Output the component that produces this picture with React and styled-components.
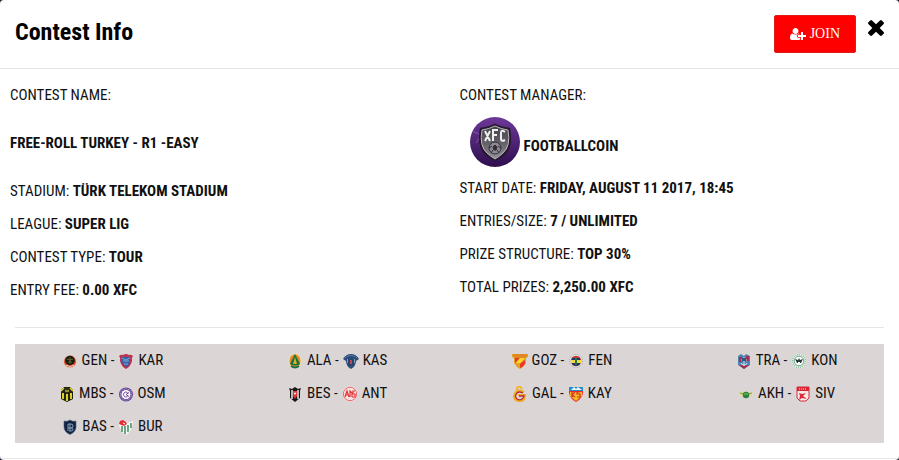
import React from "react";
import styled, { createGlobalStyle } from "styled-components";

const GlobalStyle = createGlobalStyle`
  * { box-sizing: border-box; }
  body {
    margin: 0;
    background: #25232f;
    color: #111;
    font-family: "Roboto Condensed", "Liberation Sans Narrow", Roboto, sans-serif;
    font-size: 15px;
    line-height: 23px;
  }
`;

const Modal = styled.section`
  background: #fff;
  border-radius: 4px;
  overflow: hidden;
`;

const Header = styled.header`
  display: flex;
  align-items: flex-start;
  gap: 12px;
  padding: 15px;
  border-bottom: 1px solid #e5e5e5;
`;

const Title = styled.h1`
  flex: 1;
  margin: 0;
  color: #000;
  font-size: 24px;
  font-weight: 700;
  line-height: 35px;
`;

const JoinButton = styled.button`
  display: flex;
  align-items: center;
  justify-content: center;
  gap: 4px;
  height: 38px;
  padding: 0 15px;
  border: 1px solid #e01b1b;
  border-radius: 2px;
  background: #f00;
  color: #fff;
  font-family: "Liberation Serif", serif;
  font-size: 14px;
  cursor: pointer;

  svg { width: 16px; height: 14px; fill: currentColor; }
`;

const CloseButton = styled.button`
  display: flex;
  padding: 2px 0;
  border: 0;
  background: none;
  color: #000;
  cursor: pointer;

  svg { width: 16px; height: 22px; fill: currentColor; }
`;

const Details = styled.div`
  display: grid;
  grid-template-columns: 1fr 1fr;
  padding: 15px 0 25px;
`;

const Column = styled.div`
  display: flex;
  flex-direction: column;
  gap: 10px;
  padding: 0 10px;
`;

const Field = styled.p`
  margin: 0;
  font-weight: ${(p) => (p.$strong ? 700 : 400)};
  padding: ${(p) => (p.$spaced ? "15px 0" : "0")};

  strong { font-weight: 700; }
`;

const Manager = styled.div`
  display: flex;
  align-items: center;
  gap: 4px;
  padding-left: 10px;
  font-weight: 700;

  svg { width: 50px; height: 50px; }
  span { padding-top: 8px; }
`;

const Fixtures = styled.div`
  margin: 0 15px;
  padding: 16px 0 15px;
  border-top: 1px solid #e5e5e5;
`;

const FixturePanel = styled.div`
  background: #dbd5d5;
`;

const FixtureList = styled.ul`
  display: grid;
  grid-template-columns: repeat(4, 1fr);
  margin: 0 -15px;
  padding: 0;
  list-style: none;
`;

const FixtureRow = styled.li`
  display: flex;
  align-items: center;
  justify-content: center;
  gap: 4px;
  height: 33px;
  white-space: nowrap;

  svg { width: 16px; height: 16px; }
`;

const Footer = styled.footer`
  height: 2px;
  border-top: 1px solid #e5e5e5;
`;

const shield = "M2 2Q5 3 8 1Q11 3 14 2V8Q14 13 8 15.500Q2 13 2 8Z";

const crests = {
  GEN: (
    <>
      <circle cx="8" cy="8.500" r="6.500" fill="#e8b9a0" />
      <circle cx="8" cy="8.500" r="5.800" fill="#d9361f" />
      <circle cx="8" cy="7.500" r="4.700" fill="#171b12" />
      <path d="M5 6l3 1 3-1M8 4v7M6 9h4" stroke="#5d6a2a" fill="none" />
      <path d="M4 12q4 3 8 0" stroke="#f6d8ba" fill="none" />
    </>
  ),
  KAR: (
    <>
      <path d="M1 3Q3 1 5 2Q8 0 11 2Q13 1 15 3Q13 5 14 8Q13 13 8 16Q3 13 2 8Q3 5 1 3Z" fill="#b93450" />
      <path d="M4 4h8v5q-1 3-4 5q-3-2-4-5Z" fill="#315fa9" />
      <path d="M4 5l4 2 4-2M5 8h6M6 11h4" stroke="#89add8" fill="none" />
    </>
  ),
  MBS: (
    <>
      <path d="M2 4L5 1h6l3 3v9l-6 3-6-3Z" fill="#20200d" />
      <path d="M4 7v6M8 8v7M12 7v6" stroke="#eae329" strokeWidth="1.800" />
      <path d="M2 5l3-3M14 5l-3-3M3 9h2M11 9h2" stroke="#ded62a" strokeWidth="1.500" />
      <path d="M6 2h4v4l-2 2-2-2Z" fill="#34320d" />
      <path d="M6 5h4" stroke="#f0ed70" />
    </>
  ),
  OSM: (
    <>
      <circle cx="8" cy="8.500" r="7" fill="#69459a" />
      <circle cx="8" cy="8.500" r="5.600" fill="none" stroke="#c6b5d9" strokeDasharray="1 1" />
      <circle cx="8" cy="8.500" r="4.500" fill="#fff" />
      <path d="M9.500 6.500A2.500 2.500 0 1 0 9.500 10.500M8 8.500l3-2M8 8.500l3 2" stroke="#69459a" fill="none" />
    </>
  ),
  BAS: (
    <>
      <path d={shield} fill="#102344" stroke="#53637b" strokeWidth=".6" />
      <path d="M6 12V5h3q2 0 2 2t-2 2H6m3 0q2 0 2 1.500T9 12H7M8 5v7" fill="none" stroke="#a9bbd0" strokeWidth=".8" />
    </>
  ),
  BUR: (
    <>
      <path d="M1 5L4 2h3l3 2 5-2q0 9-7 14Q2 13 1 5Z" fill="#f5f8f3" />
      <path d="M4 7v6M7 7v8M10 6v7M13 4v5" stroke="#348455" strokeWidth="1.400" />
      <path d="M1 5l1-3 3-1 3 2 1 2-3 2Z" fill="#e52b34" />
      <path d="M5 4l2 1M9 4l2 2" stroke="#fff" />
    </>
  ),
  ALA: (
    <>
      <ellipse cx="8" cy="8" rx="6.500" ry="7.500" fill="#f3e6b4" />
      <ellipse cx="8" cy="8" rx="5.600" ry="6.700" fill="#e48c27" />
      <path d="M8 1L3 11q5 3 10 0Z" fill="#147141" />
      <path d="M8 4l-2 7h4Z" fill="#d6b22d" />
      <path d="M4 13q4 3 8 0" stroke="#187243" strokeWidth="2" fill="none" />
    </>
  ),
  KAS: (
    <>
      <path d="M0 6Q3 1 8 1Q13 1 16 6L13 8q0 5-5 8Q3 13 3 8Z" fill="#294c79" />
      <path d="M2 5q6-5 12 0" stroke="#91a9c6" fill="none" strokeDasharray="1 1" />
      <path d="M4 6h8v3q-1 3-4 5Q5 12 4 9Z" fill="#8fa2b8" />
      <path d="M5 6h6v6l-3 2-3-2Z" fill="#24466e" />
      <path d="M7 7h2v4H7Z" fill="#c94558" />
    </>
  ),
  BES: (
    <>
      <path d="M2 2l3 1 3-2 3 2 3-1-1 3v7l-5 4-5-4V5Z" fill="#171717" />
      <path d="M5 4v9M11 4v9" stroke="#eee" strokeWidth="1.500" />
      <path d="M6 5h4v5l-2 3-2-3Z" fill="#e43235" />
      <circle cx="8" cy="7.500" r="1" fill="#fff" />
    </>
  ),
  ANT: (
    <>
      <circle cx="8" cy="8" r="7.500" fill="#f8e3e2" />
      <circle cx="8" cy="8" r="6.700" fill="none" stroke="#e86868" />
      <path d="M3 11l2-6 2 6M4 9h2M8 11V5l2 2v4M13 5h-2v3h2v3h-3" fill="none" stroke="#df3438" strokeWidth="1.200" />
    </>
  ),
  GOZ: (
    <>
      <path d="M0 1h16v3l-2 1v5q-2 4-6 6-4-2-6-6V5L0 4Z" fill="#e4a126" />
      <path d="M1 2h14M2 4h12" stroke="#e36b22" />
      <path d="M3 5h5L3 10ZM8 11l5-4v4q-2 3-5 4Z" fill="#e7372b" />
      <path d="M8 5h5L8 10H4Z" fill="#ffdc28" />
    </>
  ),
  FEN: (
    <>
      <circle cx="8" cy="8" r="7.500" fill="#e5e3e3" />
      <circle cx="8" cy="8" r="6.700" fill="none" stroke="#879da2" strokeDasharray="1 1" />
      <circle cx="8" cy="8" r="5.300" fill="#cf332b" />
      <path d="M4 5h8v6q-4 4-8 0Z" fill="#1b376c" />
      <path d="M3 7h10v3H3Z" fill="#f0dd39" />
      <path d="M8 5v7" stroke="#287648" strokeWidth="2" />
    </>
  ),
  GAL: (
    <g fill="none">
      <path d="M10 3Q8-1 5 2q-1 3 3 3" stroke="#f3b52b" strokeWidth="2" />
      <path d="M12 6Q7 3 4 6q-4 5 0 8 5 3 8-1l1-4H6" stroke="#f0aa27" strokeWidth="2.200" />
      <path d="M11 7Q7 5 5 7q-3 3 0 6 4 2 6-1l1-2H7" stroke="#b82d35" strokeWidth="1.300" />
    </g>
  ),
  KAY: (
    <>
      <path d="M1 1h14v6q-1 6-7 9-6-3-7-9Z" fill="#e72d28" />
      <path d="M1 1h14v4H1Z" fill="#258dc9" />
      <path d="M3 4l3-3 2 2 2-2 4 3" fill="#eef5f6" />
      <path d="M2 6h12v4l-6 5-6-5Z" fill="#f0bb24" />
      <path d="M4 6v5M7 6L4 9l3 2M12 6H9v2h3v3H9" stroke="#db2b22" strokeWidth="1.200" fill="none" />
    </>
  ),
  TRA: (
    <>
      <path d="M2 3l3-2 3 2 2-2 4 2v9l-6 4-6-4Z" fill="#4c83b0" />
      <path d="M3 4h3v5H3ZM10 3h3v5h-3ZM3 12h10l-5 4Z" fill="#a52d50" />
      <path d="M5 7h6M8 4v9M5 10q0 2 3 2t3-2" stroke="#cee7ef" fill="none" />
      <path d="M6 5h4v3H6Z" fill="#275581" />
    </>
  ),
  KON: (
    <>
      <circle cx="8" cy="8" r="7.500" fill="#e8f0ea" />
      <circle cx="8" cy="8" r="6.500" fill="none" stroke="#8bbfa0" strokeWidth="1.500" strokeDasharray="1 1" />
      <circle cx="8" cy="8" r="4.800" fill="#fff" stroke="#6ba886" />
      <path d="M4 6l3 1 1-2 1 2 3-1-2 4H6Z" fill="#263d35" />
      <path d="M7 9h2v2H7Z" fill="#fff" />
    </>
  ),
  AKH: (
    <>
      <path d="M1 6l5 1 2-2 2 2 5-1-3 4-4 2-4-2Z" fill="#e5d55b" />
      <path d="M2 7l4 1M14 7l-4 1" stroke="#73aa45" />
      <circle cx="8" cy="9" r="3.200" fill="#298347" />
      <path d="M6 8h4" stroke="#8cc553" />
    </>
  ),
  SIV: (
    <>
      <path d="M2 1h12v11l-3 3H5l-3-3Z" fill="#f4e8e8" stroke="#d52c3b" />
      <path d="M2 1h12v4H2Z" fill="#db2634" />
      <path d="M4 3h8" stroke="#fff" strokeDasharray="1 1" />
      <path d="M4 7l3 1 4-1-3 3 4 3-5-1-3 2 1-4Z" fill="#d72c3b" />
    </>
  ),
};

const fixtures = [
  ["GEN", "KAR"], ["ALA", "KAS"], ["GOZ", "FEN"], ["TRA", "KON"],
  ["MBS", "OSM"], ["BES", "ANT"], ["GAL", "KAY"], ["AKH", "SIV"],
  ["BAS", "BUR"],
];

const Crest = ({ team }) => (
  <svg viewBox="0 0 16 16" aria-hidden="true">{crests[team]}</svg>
);

const UserPlusIcon = () => (
  <svg viewBox="0 0 2048 1792" aria-hidden="true">
    <path d="M704 896q-159 0-271.500-112.500t-112.500-271.500 112.500-271.500 271.500-112.500 271.500 112.500 112.500 271.500-112.500 271.500-271.500 112.500zm960 128h352q13 0 22.500 9.500t9.500 22.500v192q0 13-9.500 22.500t-22.500 9.500h-352v352q0 13-9.500 22.500t-22.500 9.500h-192q-13 0-22.500-9.500t-9.500-22.500v-352h-352q-13 0-22.500-9.500t-9.500-22.500v-192q0-13 9.500-22.500t22.500-9.500h352v-352q0-13 9.500-22.500t22.500-9.500h192q13 0 22.500 9.500t9.500 22.500v352zm-736 224q0 52 38 90t90 38h256v238q-68 50-171 50h-874q-121 0-194-69t-73-190q0-53 3.500-103.500t14-109 26.500-108.500 43-97.500 62-81 85.500-53.500 111.500-20q19 0 39 17 79 61 154.500 91.500t164.500 30.500 164.500-30.500 154.500-91.500q20-17 39-17 132 0 217 96h-223q-52 0-90 38t-38 90v192z" />
  </svg>
);

const CloseIcon = () => (
  <svg viewBox="302 238 1188 1188" aria-hidden="true">
    <path d="M1490 1322q0 40-28 68l-136 136q-28 28-68 28t-68-28l-294-294-294 294q-28 28-68 28t-68-28l-136-136q-28-28-28-68t28-68l294-294-294-294q-28-28-28-68t28-68l136-136q28-28 68-28t68 28l294 294 294-294q28-28 68-28t68 28l136 136q28 28 28 68t-28 68l-294 294 294 294q28 28 28 68z" transform="translate(0 -128)" />
  </svg>
);

const ManagerBadge = () => (
  <svg viewBox="0 0 50 50" aria-hidden="true">
    <defs>
      <linearGradient id="badge" x1="0" y1="0" x2="0" y2="1">
        <stop stopColor="#6d3899" />
        <stop offset=".6" stopColor="#48206d" />
        <stop offset="1" stopColor="#2e0d4d" />
      </linearGradient>
      <linearGradient id="metal" x1="0" y1="0" x2="0" y2="1">
        <stop stopColor="#43404a" />
        <stop offset=".55" stopColor="#66636b" />
        <stop offset="1" stopColor="#99979d" />
      </linearGradient>
    </defs>
    <circle cx="25" cy="25" r="25" fill="url(#badge)" />
    <path d="M2 14l9 4-5 8" fill="none" stroke="#9877b0" strokeWidth=".6" />
    <path d="M25 8q6 3 14 4 3 18-5 25-3 3-9 6-6-3-9-6-8-7-5-25 8-1 14-4Z" fill="url(#metal)" stroke="#27172f" strokeWidth="2.500" />
    <path d="M25 9q6 3 13 4 3 16-5 23-3 3-8 6-5-3-8-6-8-7-5-23 7-1 13-4Z" fill="none" stroke="#bdbbc0" />
    <g fill="none" stroke="#eee" strokeWidth="2">
      <path d="M15 14l5 10M20 14l-5 10M23 24V13h5M23 18h4M35 15q-4-3-4 1v6q0 3 4 1" />
    </g>
    <circle cx="25" cy="31" r="6" fill="#8b8790" stroke="#37313d" />
    <path d="M25 28l2 2-1 3h-2l-1-3ZM19 31l3-2M31 31l-3-2M23 33l-2 3M27 33l2 3" fill="#302b37" stroke="#302b37" />
  </svg>
);

export default function App() {
  return (
    <>
      <GlobalStyle />
      <Modal aria-labelledby="contest-title">
        <Header>
          <Title id="contest-title">Contest Info</Title>
          <JoinButton type="button"><UserPlusIcon />JOIN</JoinButton>
          <CloseButton type="button" aria-label="Close"><CloseIcon /></CloseButton>
        </Header>
        <Details>
          <Column>
            <Field>CONTEST NAME:</Field>
            <Field $strong $spaced>FREE-ROLL TURKEY - R1 -EASY</Field>
            <Field>STADIUM: <strong>TÜRK TELEKOM STADIUM</strong></Field>
            <Field>LEAGUE: <strong>SUPER LIG</strong></Field>
            <Field>CONTEST TYPE: <strong>TOUR</strong></Field>
            <Field>ENTRY FEE: <strong>0.00 XFC</strong></Field>
          </Column>
          <Column>
            <Field>CONTEST MANAGER:</Field>
            <Manager><ManagerBadge /><span>FOOTBALLCOIN</span></Manager>
            <Field>START DATE: <strong>FRIDAY, AUGUST 11 2017, 18:45</strong></Field>
            <Field>ENTRIES/SIZE: <strong>7 / UNLIMITED</strong></Field>
            <Field>PRIZE STRUCTURE: <strong>TOP 30%</strong></Field>
            <Field>TOTAL PRIZES: <strong>2,250.00 XFC</strong></Field>
          </Column>
        </Details>
        <Fixtures>
          <FixturePanel>
            <FixtureList>
              {fixtures.map(([home, away]) => (
                <FixtureRow key={home}>
                  <Crest team={home} /><span>{home} -</span><Crest team={away} /><span>{away}</span>
                </FixtureRow>
              ))}
            </FixtureList>
          </FixturePanel>
        </Fixtures>
        <Footer />
      </Modal>
    </>
  );
}
